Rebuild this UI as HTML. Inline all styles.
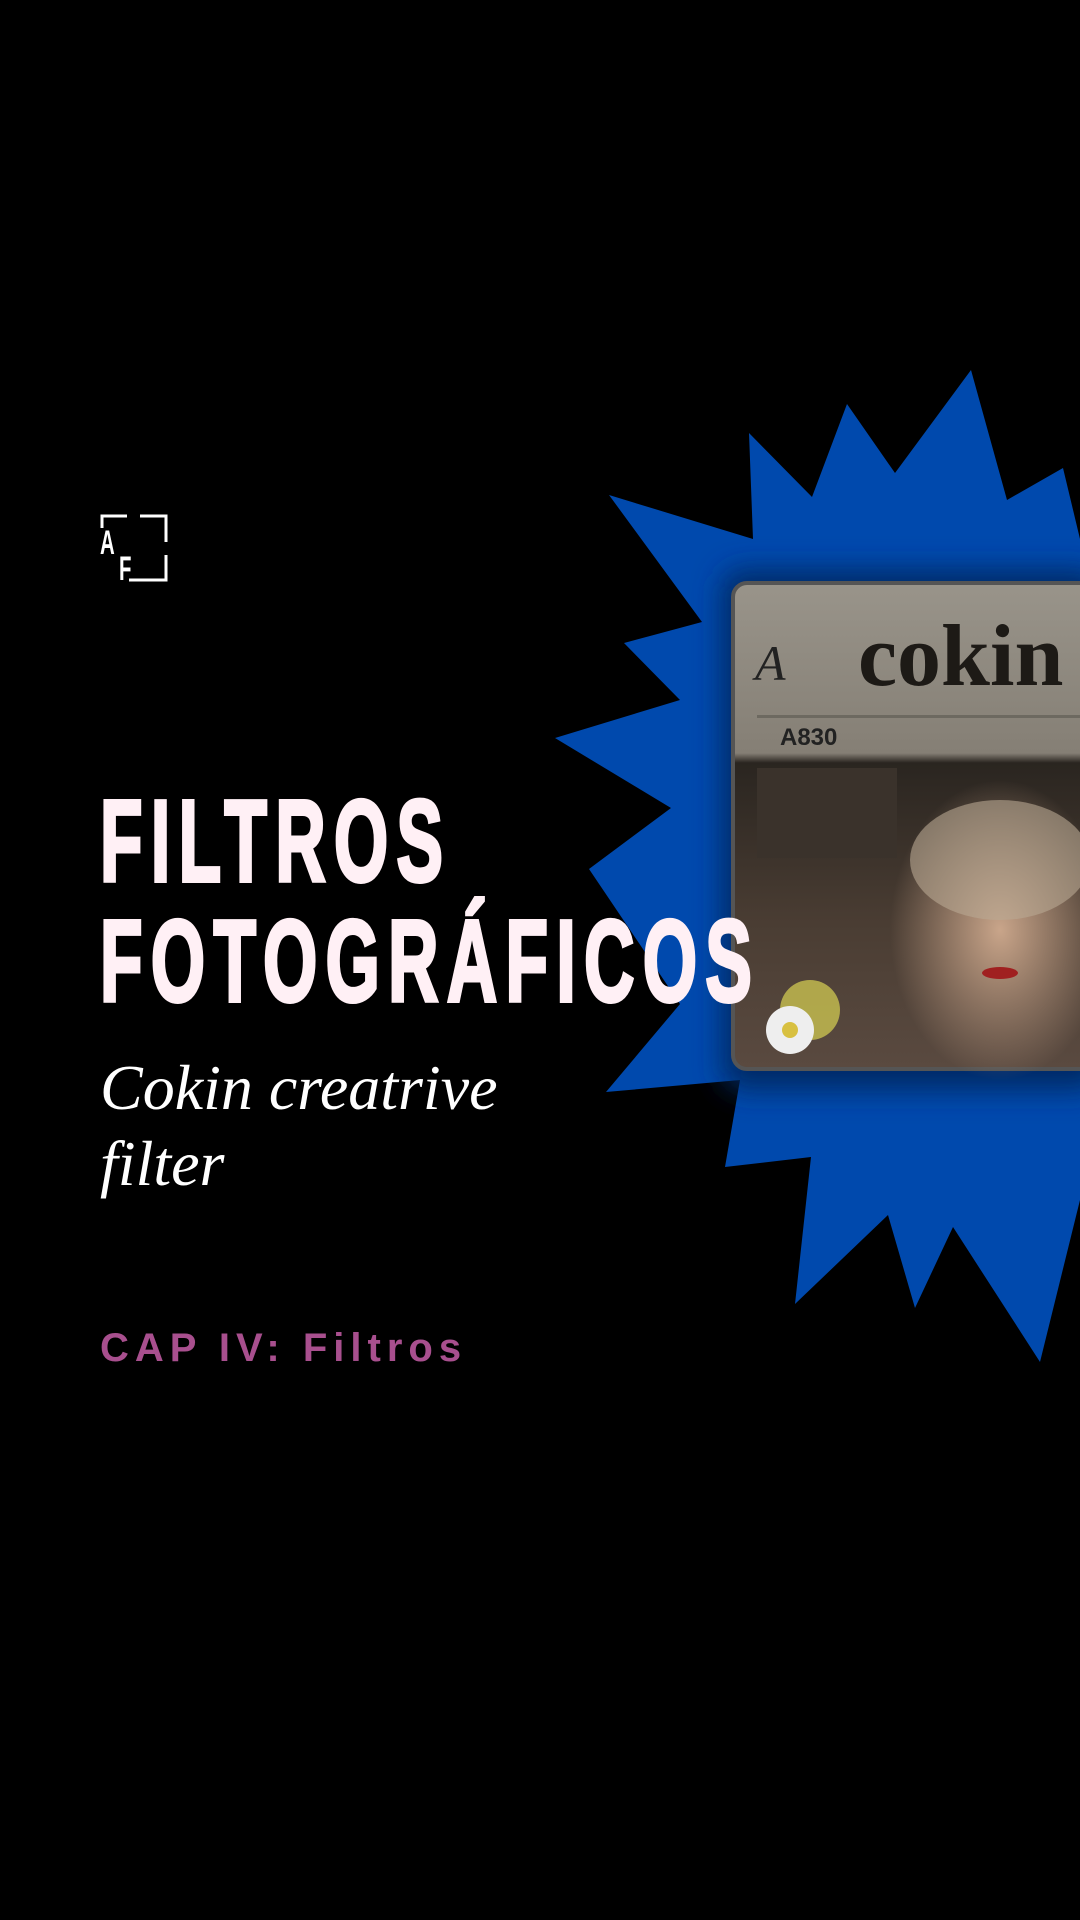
<!DOCTYPE html>
<html><head><meta charset="utf-8"><style>
html,body{margin:0;padding:0;background:#000;}
body{width:1080px;height:1920px;position:relative;overflow:hidden;font-family:"Liberation Sans",sans-serif;}
.t{position:absolute;left:100px;color:#fff0f5;font-family:"Liberation Sans",sans-serif;font-weight:bold;font-size:116px;letter-spacing:14px;line-height:1;transform:scaleX(0.6);transform-origin:left top;white-space:nowrap;-webkit-text-stroke:4px #fff0f5;}
.s{position:absolute;left:100px;color:#fff;font-family:"Liberation Serif",serif;font-style:italic;font-size:64px;line-height:76px;}
.c{position:absolute;left:100px;top:1326px;color:#a84f8e;font-weight:bold;font-size:40px;letter-spacing:6px;}
</style></head><body>
<svg width="1080" height="1920" style="position:absolute;left:0;top:0">
<defs><filter id="b"><feGaussianBlur stdDeviation="14"/></filter>
<linearGradient id="ph" x1="0" y1="0" x2="0" y2="1">
<stop offset="0" stop-color="#99948a"/><stop offset="0.35" stop-color="#857f75"/><stop offset="0.37" stop-color="#2a2520"/><stop offset="0.7" stop-color="#4a3d33"/><stop offset="1" stop-color="#5a4a40"/></linearGradient>
<radialGradient id="face" cx="0.5" cy="0.5" r="0.5"><stop offset="0" stop-color="#c9a58a"/><stop offset="1" stop-color="#c9a58a" stop-opacity="0"/></radialGradient>
</defs>
<polygon fill="#0049ad" points="971,370 1007,500 1063,468 1080,539 1080,1200 1040,1362 953,1227 915,1308 888,1215 795,1304 811,1157 725,1167 740,1080 606,1092 680,1004 589,869 671,808 555,738 680,700 624,643 702,622 609,495 753,539 749,433 812,497 847,404 895,473"/>
<rect x="722" y="570" width="380" height="520" rx="20" fill="#002a66" filter="url(#b)"/>
<rect x="733" y="583" width="360" height="486" rx="14" fill="url(#ph)" stroke="#555" stroke-width="4"/>
<ellipse cx="1000" cy="930" rx="110" ry="150" fill="url(#face)"/>
<ellipse cx="1000" cy="860" rx="90" ry="60" fill="#b9a892" opacity="0.6"/>
<ellipse cx="1000" cy="973" rx="18" ry="6" fill="#a02020"/>
<circle cx="810" cy="1010" r="30" fill="#c8c050" opacity="0.8"/>
<circle cx="790" cy="1030" r="24" fill="#eee"/>
<circle cx="790" cy="1030" r="8" fill="#d8c040"/>
<rect x="757" y="715" width="400" height="3" fill="#6d6960"/>
<rect x="757" y="768" width="140" height="90" fill="#3a322b"/>
<text x="858" y="685" font-family="Liberation Serif,serif" font-weight="bold" font-size="88" fill="#1d1a16">cokin</text>
<text x="780" y="745" font-family="Liberation Sans,sans-serif" font-weight="bold" font-size="24" fill="#222">A830</text>
<text x="755" y="680" font-family="Liberation Serif,serif" font-style="italic" font-size="50" fill="#222">A</text>
<g stroke="#fff" stroke-width="3" fill="none">
<polyline points="102,528 102,516 127,516"/>
<polyline points="140,516 166,516 166,542"/>
<polyline points="166,555 166,580 129,580"/>
</g>
<text x="100" y="554" transform="translate(100 0) scale(0.6 1) translate(-100 0)" font-family="Liberation Sans,sans-serif" font-weight="bold" font-size="34" fill="#fff">A</text>
<text x="119" y="580" transform="translate(119 0) scale(0.6 1) translate(-119 0)" font-family="Liberation Sans,sans-serif" font-weight="bold" font-size="34" fill="#fff">F</text>
</svg>
<div class="t" style="top:783px">FILTROS</div>
<div class="t" style="top:903px">FOTOGRÁFICOS</div>
<div class="s" style="top:1050px">Cokin creatrive<br>filter</div>
<div class="c">CAP IV: Filtros</div>
</body></html>
